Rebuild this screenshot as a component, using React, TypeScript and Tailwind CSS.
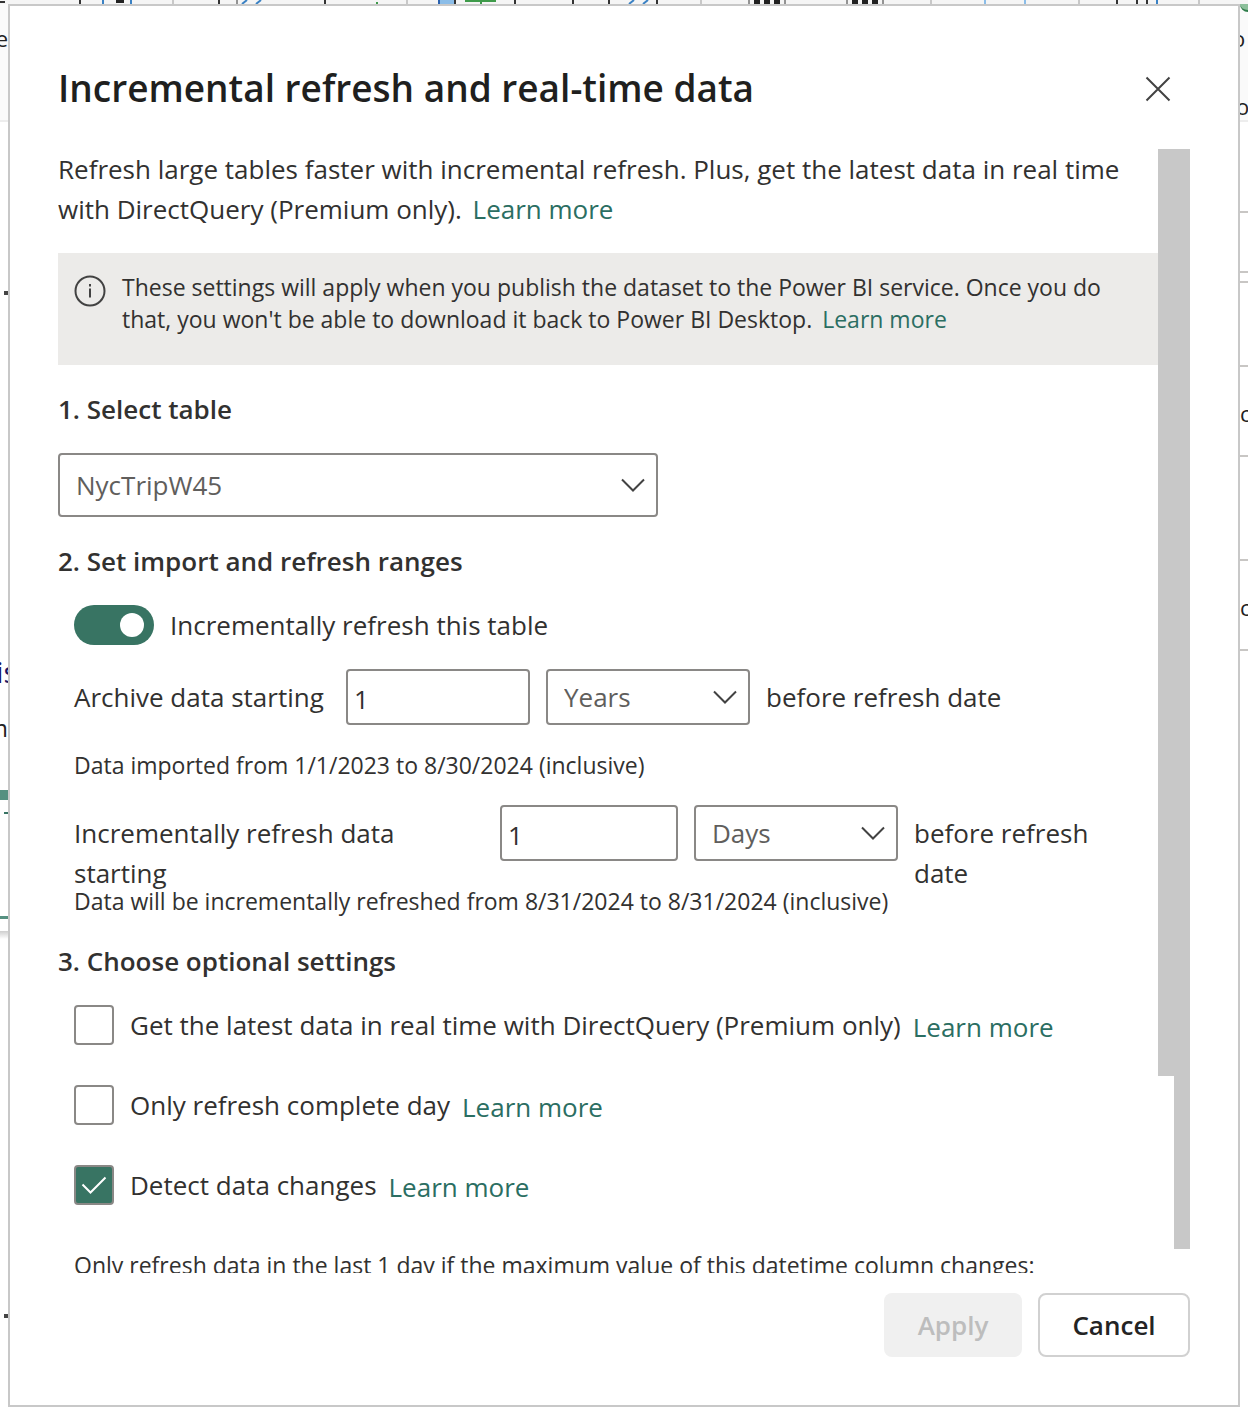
import { useState } from "react";
import type { ReactNode } from "react";

function Chevron() {
  return (
    <svg viewBox="0 0 26 16" className="pointer-events-none absolute top-1/2 right-3 h-4 w-[26px] -translate-y-1/2" fill="none" stroke="#424242" strokeWidth="2">
      <path d="M2 2.5 L13 13.5 L24 2.5" />
    </svg>
  );
}

function Dropdown({ label, options, className }: { label: string; options: string[]; className: string }) {
  return (
    <div className={`relative shrink-0 ${className}`}>
      <select aria-label={label} className="h-full w-full appearance-none rounded-sm border-2 border-[#8a8886] bg-white px-4 text-[26px] text-[#605e5c]">
        {options.map((o) => (
          <option key={o}>{o}</option>
        ))}
      </select>
      <Chevron />
    </div>
  );
}

function LearnMore({ className = "" }: { className?: string }) {
  return (
    <a href="#learn" className={`text-[#2b6e62] ${className}`}>
      Learn more
    </a>
  );
}

function Option({ id, label, initial = false }: { id: string; label: string; initial?: boolean }) {
  const [on, setOn] = useState(initial);
  return (
    <div className="flex h-10 items-center">
      <span className="relative mr-4 size-10 shrink-0">
        <input
          id={id}
          type="checkbox"
          checked={on}
          onChange={() => setOn(!on)}
          className="block size-10 appearance-none rounded-sm border-2 border-[#8a8886] bg-white checked:bg-[#387463]"
        />
        {on && (
          <svg viewBox="0 0 40 40" className="pointer-events-none absolute inset-0" fill="none" stroke="#fff" strokeWidth="2">
            <path d="M8.5 19.5 L16.5 27.5 L31.500 12.500" />
          </svg>
        )}
      </span>
      <label htmlFor={id}>{label}</label>
      <LearnMore className="ml-3 pt-1" />
    </div>
  );
}

function Heading({ children }: { children: ReactNode }) {
  return <h2 className="mt-6 text-[26px] leading-10 font-semibold">{children}</h2>;
}

function RibbonEdge() {
  return (
    <svg className="block h-1 w-full shrink-0 bg-[#f5f5f5]" fill="none">
      <path d="M0 2 H5 M80 0 V4 M219 0 V4 M325 0 V4 M455 0 V4 M515 0 V4 M573 0 V4 M609 0 V4 M657 0 V4 M1117 0 V4 M1137 0 V4 M1147 0 V4" stroke="#333" strokeWidth="2" />
      <path d="M116 1 H124 M754 2 H760 M764 2 H770 M774 2 H780 M852 2 H858 M862 2 H868 M872 2 H878" stroke="#222" strokeWidth="4" />
      <path d="M749 0 V4 M785 0 V4 M847 0 V4 M883 0 V4 M237 0 V4" stroke="#333" strokeWidth="1" />
      <path d="M173 0 V4 M407 0 V4 M701 0 V4 M931 0 V4 M1079 0 V4 M1199 0 V4" stroke="#c8c8c8" strokeWidth="2" />
      <path d="M103 0 V4 M131 0 V4 M247 0 L242 4 M261 0 L256 4 M634 0 L629 4 M648 0 L643 4 M1157 0 V4" stroke="#3b82c4" strokeWidth="2" />
      <path d="M985 0 V4 M1025 0 V4" stroke="#8bbde8" strokeWidth="2" />
      <path d="M439 0 H454 V4 H439 Z" fill="#8bbde8" />
      <path d="M439 0 V4" stroke="#2b62b0" strokeWidth="2" />
      <path d="M465 1 H496 M481 0 V4 M376 3 H378" stroke="#3f9b4b" strokeWidth="2" />
    </svg>
  );
}

function LeftEdge() {
  return (
    <div aria-hidden="true" className="flex w-2 shrink-0 flex-col overflow-hidden text-[#222]">
      <div className="flex h-[118px] shrink-0 justify-end border-b-2 border-[#ededed] bg-[#fafafa] pt-4 text-[22px] leading-9">e</div>
      <div className="mt-[169px] h-1 w-1 shrink-0 self-end bg-[#444]" />
      <div className="mt-[359px] -ml-1 w-10 shrink-0 text-[30px] leading-9 text-[#1b1464]">is</div>
      <div className="mt-5 flex shrink-0 justify-end text-[24px] leading-9">m</div>
      <div className="mt-11 h-[10px] shrink-0 bg-[#559080]" />
      <div className="mt-3 ml-1 h-[2px] shrink-0 bg-[#387463]" />
      <div className="mt-[102px] h-[3px] shrink-0 bg-[#559080]" />
      <div className="mt-3 h-2 shrink-0 bg-linear-to-b from-[#cfcfcf] to-white" />
      <div className="mt-[375px] h-1 w-1 shrink-0 self-end bg-[#444]" />
    </div>
  );
}

function RightEdge() {
  return (
    <div aria-hidden="true" className="flex w-2 shrink-0 flex-col overflow-hidden text-[22px] leading-9 text-[#222]">
      <div className="h-[118px] shrink-0 border-b-2 border-[#ededed] bg-[#fafafa]">
        <div className="h-2 rounded-bl-lg border-b-2 border-[#2f7d4a] bg-[#8cc09b]" />
        <div className="mt-2 -ml-2">o</div>
        <div className="mt-8 -ml-1">o</div>
      </div>
      <div className="h-[91px] shrink-0 border-b-2 border-[#c8c6c4]" />
      <div className="h-[60px] shrink-0 border-b-2 border-[#c8c6c4]" />
      <div className="h-[10px] shrink-0 border-b-2 border-[#c8c6c4]" />
      <div className="h-[84px] shrink-0 border-b-2 border-[#c8c6c4]" />
      <div className="h-[90px] shrink-0 border-b-2 border-[#c8c6c4] pt-7">c</div>
      <div className="h-[104px] shrink-0 border-b-2 border-[#c8c6c4]" />
      <div className="h-[90px] shrink-0 border-b-2 border-[#c8c6c4] pt-7">c</div>
    </div>
  );
}

export default function App() {
  const [enabled, setEnabled] = useState(true);
  return (
    <div className="flex h-screen flex-col overflow-hidden bg-white pb-px font-['Open_Sans',sans-serif] text-[26px] leading-10 text-[#323130]">
      <RibbonEdge />
      <div className="flex min-h-0 flex-1">
        <LeftEdge />
        <div role="dialog" aria-labelledby="dialog-title" className="flex min-w-0 flex-1 flex-col border-2 border-[#c8c8c8] bg-white pr-12 pb-12 pl-12">
          <header className="flex h-[143px] shrink-0 items-start justify-between pt-14">
            <h1 id="dialog-title" className="text-[37px] leading-[52px] font-semibold text-[#201f1e]">
              Incremental refresh and real-time data
            </h1>
            <button type="button" aria-label="Close" className="mt-[7px] mr-3 flex size-10 items-center justify-center">
              <svg viewBox="0 0 26 26" className="size-[26px]" fill="none" stroke="#424242" strokeWidth="2">
                <path d="M1.500 1.500 L24.500 24.500 M24.500 1.500 L1.500 24.500" />
              </svg>
            </button>
          </header>

          <div className="flex min-h-0 flex-1 overflow-hidden">
            <main className="min-w-0 flex-1">
              <p>
                Refresh large tables faster with incremental refresh. Plus, get the latest data in real time with DirectQuery (Premium only). <LearnMore className="ml-1" />
              </p>

              <div className="mt-6 flex bg-[#ecebe9] px-4 pt-[18px] pb-[30px] text-[23px] leading-8">
                <svg viewBox="0 0 32 32" className="mt-1 mr-4 size-8 shrink-0" fill="none" stroke="#424242" strokeWidth="2">
                  <circle cx="16" cy="16" r="14.500" />
                  <path d="M16 13.500 V22.500 M16 9 V11.500" />
                </svg>
                <p className="pr-6">
                  These settings will apply when you publish the dataset to the Power BI service. Once you do that, you won't be able to download it back to Power BI Desktop. <LearnMore className="ml-1" />
                </p>
              </div>

              <Heading>1. Select table</Heading>
              <Dropdown label="Select table" options={["NycTripW45"]} className="mt-6 h-16 w-[600px]" />

              <Heading>2. Set import and refresh ranges</Heading>
              <section className="mt-6 pl-4">
                <div className="flex h-10 items-center gap-4">
                  <button
                    id="incremental"
                    type="button"
                    role="switch"
                    aria-checked={enabled}
                    onClick={() => setEnabled(!enabled)}
                    className={`flex h-10 w-20 items-center rounded-full px-[10px] ${enabled ? "justify-end bg-[#387463]" : "justify-start bg-[#8a8886]"}`}
                  >
                    <span className="size-6 rounded-full bg-white" />
                  </button>
                  <label htmlFor="incremental">Incrementally refresh this table</label>
                </div>

                <div className="mt-6 flex items-start gap-4">
                  <label htmlFor="archive" className="w-64 shrink-0 pt-2">
                    Archive data starting
                  </label>
                  <input id="archive" defaultValue="1" className="h-14 w-[184px] shrink-0 rounded-sm border-2 border-[#8a8886] px-[6px] pt-1" />
                  <Dropdown label="Archive unit" options={["Years", "Months", "Days"]} className="h-14 w-[204px]" />
                  <span className="pt-2">before refresh date</span>
                </div>
                <p className="mt-6 text-[23px] leading-8">Data imported from 1/1/2023 to 8/30/2024 (inclusive)</p>

                <div className="mt-6 flex h-20 items-start gap-4">
                  <label htmlFor="refresh" className="w-[410px] shrink-0 pt-2 pr-20">
                    Incrementally refresh data starting
                  </label>
                  <input id="refresh" defaultValue="1" className="h-14 w-[178px] shrink-0 rounded-sm border-2 border-[#8a8886] px-[6px] pt-1" />
                  <Dropdown label="Refresh unit" options={["Days", "Months", "Years"]} className="h-14 w-[204px]" />
                  <span className="pt-2 pr-6">before refresh date</span>
                </div>
                <p className="text-[23px] leading-8">Data will be incrementally refreshed from 8/31/2024 to 8/31/2024 (inclusive)</p>
              </section>

              <Heading>3. Choose optional settings</Heading>
              <section className="mt-6 flex flex-col gap-10 pl-4">
                <Option id="realtime" label="Get the latest data in real time with DirectQuery (Premium only)" />
                <Option id="complete" label="Only refresh complete day" />
                <Option id="detect" label="Detect data changes" initial />
                <p className="text-[23px] leading-10">Only refresh data in the last 1 day if the maximum value of this datetime column changes:</p>
              </section>
            </main>
            <div aria-hidden="true" className="flex w-4 shrink-0 flex-col pb-[197px]">
              <div className="flex-1 bg-[#c8c8c8]" />
            </div>
            <div aria-hidden="true" className="flex w-4 shrink-0 flex-col pb-6">
              <div className="flex-1 bg-[#c8c8c8]" />
            </div>
          </div>

          <footer className="mt-5 flex h-16 shrink-0 justify-end gap-4 font-semibold">
            <button type="button" disabled className="w-[138px] rounded-lg bg-[#f0f0f0] text-[#bdbdbd]">
              Apply
            </button>
            <button type="button" className="w-[152px] rounded-lg border-2 border-[#d1d1d1] bg-white text-[#242424]">
              Cancel
            </button>
          </footer>
        </div>
        <RightEdge />
      </div>
    </div>
  );
}
